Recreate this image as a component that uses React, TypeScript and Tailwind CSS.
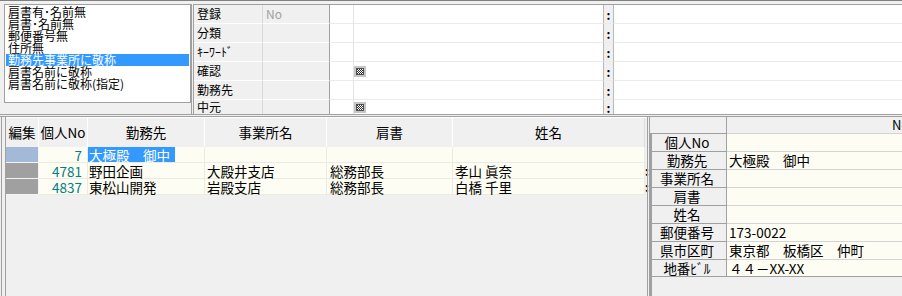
import React from 'react';

const listItems = [
  '肩書有･名前無',
  '肩書･名前無',
  '郵便番号無',
  '住所無',
  '勤務先事業所に敬称',
  '肩書名前に敬称',
  '肩書名前に敬称(指定)',
];

const topRows = [
  { label: '登録', no: 'No', check: false },
  { label: '分類', no: '', check: false },
  { label: 'ｷｰﾜｰﾄﾞ', no: '', check: false },
  { label: '確認', no: '', check: true },
  { label: '勤務先', no: '', check: false },
  { label: '中元', no: '', check: true },
];

const records = [
  { no: '7', company: '大極殿　御中', office: '', title: '', name: '', selected: true },
  { no: '4781', company: '野田企画', office: '大殿井支店', title: '総務部長', name: '孝山 眞奈', selected: false },
  { no: '4837', company: '東松山開発', office: '岩殿支店', title: '総務部長', name: '白橋 千里', selected: false },
];

const detail = [
  { label: '個人No', value: '' },
  { label: '勤務先', value: '大極殿　御中' },
  { label: '事業所名', value: '' },
  { label: '肩書', value: '' },
  { label: '姓名', value: '' },
  { label: '郵便番号', value: '173-0022' },
  { label: '県市区町', value: '東京都　板橋区　仲町' },
  { label: '地番ﾋﾞﾙ', value: '４４－XX-XX' },
];

// small checkered box used by the 確認 / 中元 rows
const CheckBox = () => {
  const dots = [];
  for (let y = 0; y < 5; y++) {
    for (let x = 0; x < 6; x++) {
      if ((x + y) % 2 === 0) dots.push(<rect key={`${x}-${y}`} x={3 + x} y={3 + y} width="1" height="1" fill="#303030" />);
    }
  }
  return (
    <svg width="12" height="11" viewBox="0 0 12 11" shapeRendering="crispEdges">
      <rect x="0" y="0" width="12" height="11" fill="#c6c6c6" />
      <rect x="2" y="2" width="8" height="7" fill="#ffffff" />
      <rect x="2.5" y="2.5" width="7" height="6" fill="none" stroke="#505050" strokeWidth="1" />
      {dots}
    </svg>
  );
};

const App = () => {
  return (
    <div className="w-[902px] h-[296px] overflow-hidden bg-[#f0f0f0] flex flex-col text-black font-['Noto_Sans_CJK_JP',sans-serif]">
      {/* top filter area */}
      <div className="h-[114px] border-t border-[#808080] pt-[3px] flex">
        <div className="w-[191px]">
          <div className="ml-[4px] w-[187px] h-[99px] border border-[#a0a0a0] bg-white p-[1px] text-[12px] leading-[12px]">
            {listItems.map((t, i) => (
              <div
                key={t}
                className={`h-[12px] pl-[2px] whitespace-nowrap ${i === 4 ? 'bg-[#3399ff] text-white' : ''}`}
              >
                {t}
              </div>
            ))}
          </div>
        </div>
        <div className="w-[3px] border-x border-[#a0a0a0]" />
        <div className="flex-1 flex flex-col border-t border-[#a0a0a0] text-[12px]">
          {topRows.map((r, i) => {
            const last = i === topRows.length - 1;
            return (
              <div key={r.label} className={`flex ${last ? 'h-[14px]' : 'h-[19px]'}`}>
                <div className={`w-[69px] pl-[3px] bg-[#f0f0f0] border-r border-[#d9d9d9] flex items-center ${last ? '' : 'border-b border-b-white'}`}>
                  {r.label}
                </div>
                <div className={`w-[67px] pl-[3px] bg-[#f0f0f0] border-r border-[#a0a0a0] flex items-center text-[#a0a0a0] ${last ? '' : 'border-b border-b-white'}`}>
                  {r.no}
                </div>
                <div className={`w-[24px] bg-white border-r border-[#e3e3e3] ${last ? '' : 'border-b border-b-[#ebebeb]'}`} />
                <div className={`w-[249px] bg-white flex items-center ${last ? '' : 'border-b border-[#ebebeb]'}`}>
                  {r.check && <CheckBox />}
                </div>
                <div className={`w-[11px] bg-[#f0f0f0] border-x border-x-[#b8b8b8] flex items-center justify-center font-bold leading-none pt-[2px] ${last ? '' : 'border-b border-b-[#ebebeb]'}`}>
                  :
                </div>
                <div className={`flex-1 bg-white ${last ? '' : 'border-b border-[#ebebeb]'}`} />
              </div>
            );
          })}
        </div>
      </div>
      <div className="h-[3px] border-y border-[#a0a0a0]" />

      {/* bottom list + detail */}
      <div className="flex-1 flex min-h-0 text-[13.5px]">
        <div className="ml-[1px] w-[5px] border-x border-[#a0a0a0]" />
        <div className="w-[641px] flex flex-col">
          <div className="h-[30px] flex bg-[#f0f0f0] border-t border-white">
            <div className="w-[33px] border-r border-white flex items-center justify-center">編集</div>
            <div className="w-[49px] border-r border-white flex items-center justify-center">個人No</div>
            <div className="w-[117px] border-r border-white flex items-center justify-center">勤務先</div>
            <div className="w-[122px] border-r border-white flex items-center justify-center">事業所名</div>
            <div className="w-[126px] border-r border-white flex items-center justify-center">肩書</div>
            <div className="w-[192px] border-r border-[#dcdcdc] flex items-center justify-center">姓名</div>
            <div className="w-[2px]" />
          </div>
          {records.map((r) => (
            <div key={r.no} className="h-[16px] flex leading-[16px]">
              <div className={`w-[33px] border-r border-b border-[#f4f4f4] ${r.selected ? 'bg-[#a3b9d8]' : 'bg-[#a0a0a0]'}`} />
              <div className="w-[49px] bg-[#fdfdf3] border-r border-b border-[#ebebe2] text-right pr-[5px] text-[#008080]">
                {r.no}
              </div>
              <div className="w-[117px] bg-[#fdfdf3] border-r border-b border-[#ebebe2] whitespace-nowrap">
                {r.selected ? (
                  <span className="inline-block h-[15px] pl-[1px] pr-[5px] bg-[#3399ff] text-white">{r.company}</span>
                ) : (
                  <span className="pl-[1px]">{r.company}</span>
                )}
              </div>
              <div className="w-[122px] bg-[#fdfdf3] border-r border-b border-[#ebebe2] pl-[2px] whitespace-nowrap">{r.office}</div>
              <div className="w-[126px] bg-[#fdfdf3] border-r border-b border-[#ebebe2] pl-[3px] whitespace-nowrap">{r.title}</div>
              <div className="w-[192px] bg-[#fdfdf3] border-r border-b border-[#ebebe2] pl-[2px] whitespace-nowrap">{r.name}</div>
              <div className="w-[2px] overflow-visible font-bold text-[12px] leading-[16px]">{r.selected ? '' : ':'}</div>
            </div>
          ))}
        </div>
        <div className="w-[3px] border-x border-[#a0a0a0]" />
        <div className="flex-1 flex flex-col min-w-0">
          <div className="h-[16px] flex bg-[#f0f0f0] text-[13px] leading-[16px]">
            <div className="w-[77px] border-r border-[#a0a0a0]" />
            <div className="flex-1 pl-[165px] whitespace-nowrap overflow-hidden">No</div>
          </div>
          <div className="flex-1 border-l-2 border-[#a0a0a0]">
            {detail.map((d, i) => (
              <div key={d.label} className={`h-[18px] flex leading-[17px] ${i === detail.length - 1 ? 'border-b border-[#a0a0a0]' : ''}`}>
                <div className="w-[75px] bg-[#f0f0f0] border-t border-r border-[#a0a0a0] text-center pr-[4px] whitespace-nowrap">
                  {d.label}
                </div>
                <div className="flex-1 bg-[#fdfdf3] border-t border-[#d4d4d4] pl-[2px] whitespace-nowrap">
                  {d.value}
                </div>
              </div>
            ))}
          </div>
        </div>
      </div>
    </div>
  );
};

export default App;
